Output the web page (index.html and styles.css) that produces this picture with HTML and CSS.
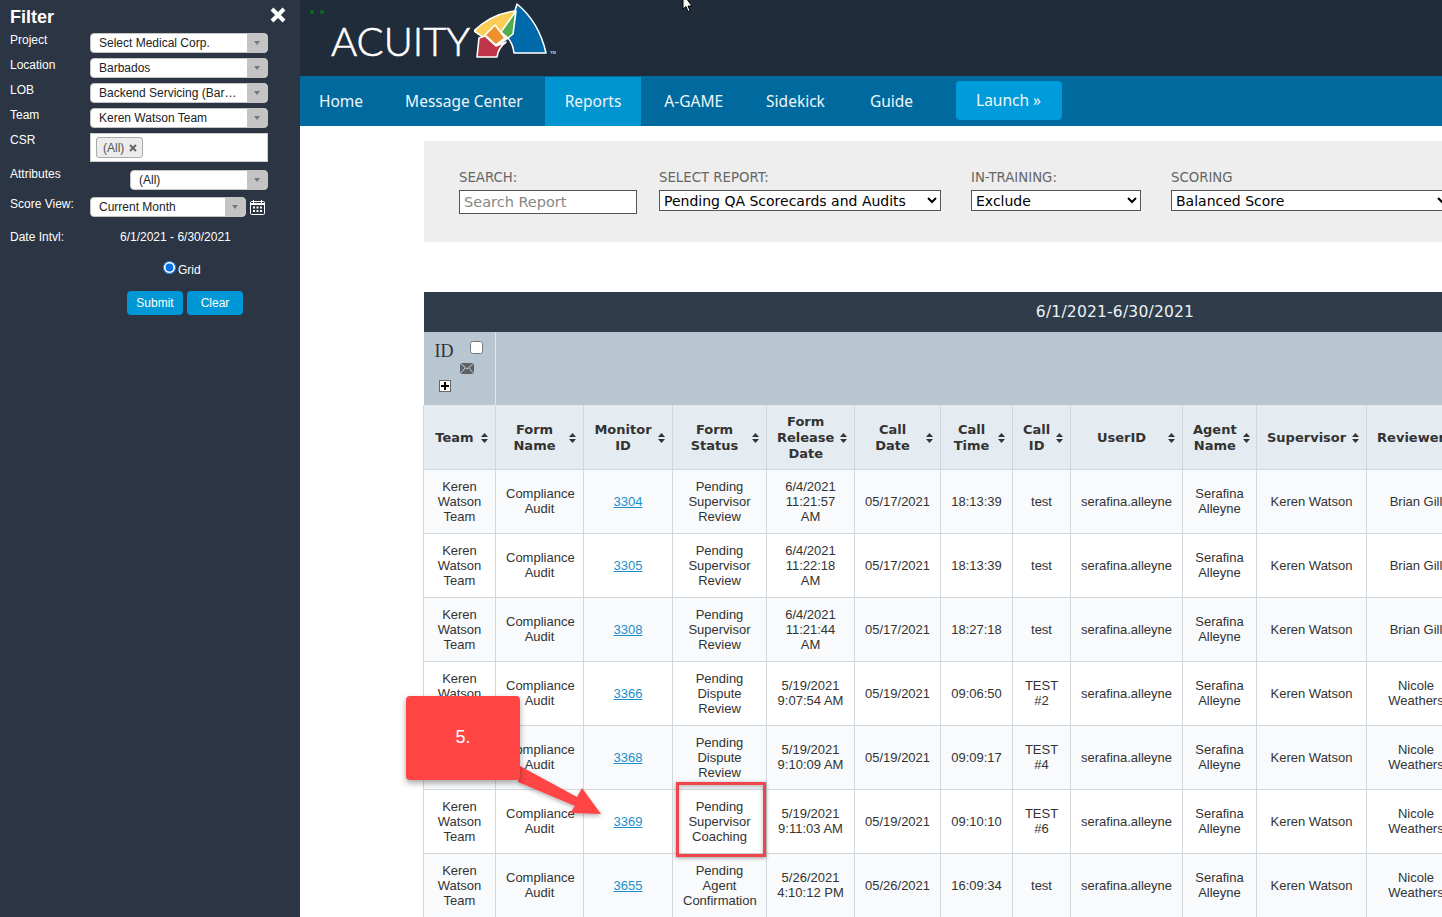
FILE: index.html
```html
<!DOCTYPE html>
<html lang="en">
<head>
    <meta charset="UTF-8">
    <meta name="viewport" content="width=device-width, initial-scale=1.0">
    <title>Acuity Reports</title>
    <link rel="stylesheet" href="styles.css">
</head>
<body>
    <!-- Filter sidebar -->
    <aside class="filter">
        <div class="filter-head">
            <h2>Filter</h2>
            <svg class="close" width="16" height="16" viewBox="0 0 16 16"><path d="M2 2 14 14M14 2 2 14" stroke="#fff" stroke-width="4"/></svg>
        </div>
        <div class="f-row">
            <label>Project</label>
            <div class="drop"><span>Select Medical Corp.</span><i class="drop-btn"></i></div>
        </div>
        <div class="f-row">
            <label>Location</label>
            <div class="drop"><span>Barbados</span><i class="drop-btn"></i></div>
        </div>
        <div class="f-row">
            <label>LOB</label>
            <div class="drop"><span>Backend Servicing (Bar…</span><i class="drop-btn"></i></div>
        </div>
        <div class="f-row">
            <label>Team</label>
            <div class="drop"><span>Keren Watson Team</span><i class="drop-btn"></i></div>
        </div>
        <div class="f-row f-csr">
            <label>CSR</label>
            <div class="multi">
                <span class="chip">(All)
                    <svg width="8" height="8" viewBox="0 0 8 8"><path d="M1 1 7 7M7 1 1 7" stroke="#666" stroke-width="2"/></svg>
                </span>
            </div>
        </div>
        <div class="f-row f-attr">
            <label>Attributes</label>
            <div class="drop drop-short"><span>(All)</span><i class="drop-btn"></i></div>
        </div>
        <div class="f-row f-score">
            <label>Score View:</label>
            <div class="drop drop-score"><span>Current Month</span><i class="drop-btn"></i></div>
            <svg class="cal" width="15" height="15" viewBox="0 0 15 15">
                <rect x="0.5" y="1.5" width="14" height="13" rx="1" fill="none" stroke="#fff"/>
                <path d="M0 3h15v2H0zM3 0h1v3H3zM11 0h1v3h-1z" fill="#fff"/>
                <path d="M3 6.500h2v2H3zM6.500 6.500h2v2h-2zM10 6.500h2v2h-2zM3 10h2v2H3zM6.500 10h2v2h-2zM10 10h2v2h-2z" fill="#fff"/>
            </svg>
        </div>
        <div class="f-row f-date">
            <label>Date Intvl:</label>
            <span class="date-val">6/1/2021 - 6/30/2021</span>
        </div>
        <div class="f-grid"><input type="radio" name="view" checked><span>Grid</span></div>
        <div class="f-btns">
            <button>Submit</button>
            <button>Clear</button>
        </div>
    </aside>

    <main class="main">
        <header class="top">
            <div class="dots"><i></i><i></i></div>
            <div class="logo">
                <span class="logo-word">ACUITY</span>
                <svg class="logo-mark" width="84" height="58" viewBox="475 2 84 58">
                    <g stroke="#fff" stroke-width="1.600" stroke-linejoin="round">
                        <path d="M518 4Q540 22 547 53L515 53Q514 43 508 37Z" fill="#0069aa"/>
                        <path d="M475 31Q492 14 516 11L509 38 497 46Z" fill="#f9cd56"/>
                        <path d="M480 38 478 57 498 57Q499 48 507 42L497 46 486 36Z" fill="#bd3546"/>
                        <path d="M486 35 496 25 506 38 497 45Z" fill="#ec912d"/>
                        <path d="M517 11 502 32 509 38 514 34Z" fill="#4fae4b"/>
                    </g>
                    <text x="551" y="54" class="logo-tm">TM</text>
                </svg>
            </div>
        </header>

        <nav class="nav">
            <a href="#" class="home">Home</a>
            <a href="#" class="msg">Message Center</a>
            <a href="#" class="active">Reports</a>
            <a href="#">A-GAME</a>
            <a href="#">Sidekick</a>
            <a href="#" class="guide">Guide</a>
            <a href="#" class="launch">Launch &raquo;</a>
        </nav>

        <div class="content">
            <div class="search-bar">
                <div class="field f-search">
                    <label>SEARCH:</label>
                    <input type="text" placeholder="Search Report">
                </div>
                <div class="field f-report">
                    <label>SELECT REPORT:</label>
                    <select><option>Pending QA Scorecards and Audits</option></select>
                </div>
                <div class="field f-train">
                    <label>IN-TRAINING:</label>
                    <select><option>Exclude</option></select>
                </div>
                <div class="field f-scoring">
                    <label>SCORING</label>
                    <select><option>Balanced Score</option></select>
                </div>
            </div>

            <table class="report">
                <colgroup>
                    <col class="c72"><col class="c88"><col class="c89"><col class="c94"><col class="c88"><col class="c86"><col class="c72"><col class="c58"><col class="c112"><col class="c74"><col class="c110"><col class="c99"><col class="c341">
                </colgroup>
                <thead>
                    <tr class="range"><th colspan="13">6/1/2021-6/30/2021</th></tr>
                    <tr class="tools">
                        <th>
                            <div class="tool-id"><span>ID</span><input type="checkbox"></div>
                            <svg class="mail" width="14" height="11" viewBox="0 0 14 11"><rect width="14" height="11" fill="#5c6268"/><path d="M0 0 7 6 14 0M0 11 5 5M14 11 9 5" stroke="#c9cfd4" fill="none"/></svg>
                            <div class="plus"></div>
                        </th>
                        <th colspan="12"></th>
                    </tr>
                    <tr class="heads">
                        <th><div class="h"><span>Team</span><svg width="7" height="10" viewBox="0 0 7 10"><path d="M3.500 0 7 4H0zM0 6h7l-3.500 4z"/></svg></div></th>
                        <th><div class="h"><span>Form Name</span><svg width="7" height="10" viewBox="0 0 7 10"><path d="M3.500 0 7 4H0zM0 6h7l-3.500 4z"/></svg></div></th>
                        <th><div class="h"><span>Monitor ID</span><svg width="7" height="10" viewBox="0 0 7 10"><path d="M3.500 0 7 4H0zM0 6h7l-3.500 4z"/></svg></div></th>
                        <th><div class="h"><span>Form Status</span><svg width="7" height="10" viewBox="0 0 7 10"><path d="M3.500 0 7 4H0zM0 6h7l-3.500 4z"/></svg></div></th>
                        <th><div class="h"><span>Form Release Date</span><svg width="7" height="10" viewBox="0 0 7 10"><path d="M3.500 0 7 4H0zM0 6h7l-3.500 4z"/></svg></div></th>
                        <th><div class="h"><span>Call Date</span><svg width="7" height="10" viewBox="0 0 7 10"><path d="M3.500 0 7 4H0zM0 6h7l-3.500 4z"/></svg></div></th>
                        <th><div class="h"><span>Call Time</span><svg width="7" height="10" viewBox="0 0 7 10"><path d="M3.500 0 7 4H0zM0 6h7l-3.500 4z"/></svg></div></th>
                        <th><div class="h"><span>Call ID</span><svg width="7" height="10" viewBox="0 0 7 10"><path d="M3.500 0 7 4H0zM0 6h7l-3.500 4z"/></svg></div></th>
                        <th><div class="h"><span>UserID</span><svg width="7" height="10" viewBox="0 0 7 10"><path d="M3.500 0 7 4H0zM0 6h7l-3.500 4z"/></svg></div></th>
                        <th><div class="h"><span>Agent Name</span><svg width="7" height="10" viewBox="0 0 7 10"><path d="M3.500 0 7 4H0zM0 6h7l-3.500 4z"/></svg></div></th>
                        <th><div class="h"><span>Supervisor</span><svg width="7" height="10" viewBox="0 0 7 10"><path d="M3.500 0 7 4H0zM0 6h7l-3.500 4z"/></svg></div></th>
                        <th><div class="h"><span>Reviewer</span><svg width="7" height="10" viewBox="0 0 7 10"><path d="M3.500 0 7 4H0zM0 6h7l-3.500 4z"/></svg></div></th>
                        <th></th>
                    </tr>
                </thead>
                <tbody>
                    <tr>
                        <td>Keren Watson Team</td><td>Compliance Audit</td><td><a href="#">3304</a></td><td>Pending Supervisor Review</td><td>6/4/2021 11:21:57 AM</td><td>05/17/2021</td><td>18:13:39</td><td>test</td><td>serafina.alleyne</td><td>Serafina Alleyne</td><td>Keren Watson</td><td>Brian Gill</td><td></td>
                    </tr>
                    <tr>
                        <td>Keren Watson Team</td><td>Compliance Audit</td><td><a href="#">3305</a></td><td>Pending Supervisor Review</td><td>6/4/2021 11:22:18 AM</td><td>05/17/2021</td><td>18:13:39</td><td>test</td><td>serafina.alleyne</td><td>Serafina Alleyne</td><td>Keren Watson</td><td>Brian Gill</td><td></td>
                    </tr>
                    <tr>
                        <td>Keren Watson Team</td><td>Compliance Audit</td><td><a href="#">3308</a></td><td>Pending Supervisor Review</td><td>6/4/2021 11:21:44 AM</td><td>05/17/2021</td><td>18:27:18</td><td>test</td><td>serafina.alleyne</td><td>Serafina Alleyne</td><td>Keren Watson</td><td>Brian Gill</td><td></td>
                    </tr>
                    <tr>
                        <td>Keren Watson Team</td><td>Compliance Audit</td><td><a href="#">3366</a></td><td>Pending Dispute Review</td><td>5/19/2021 9:07:54 AM</td><td>05/19/2021</td><td>09:06:50</td><td>TEST #2</td><td>serafina.alleyne</td><td>Serafina Alleyne</td><td>Keren Watson</td><td>Nicole Weathers</td><td></td>
                    </tr>
                    <tr>
                        <td>Keren Watson Team</td><td>Compliance Audit</td><td><a href="#">3368</a></td><td>Pending Dispute Review</td><td>5/19/2021 9:10:09 AM</td><td>05/19/2021</td><td>09:09:17</td><td>TEST #4</td><td>serafina.alleyne</td><td>Serafina Alleyne</td><td>Keren Watson</td><td>Nicole Weathers</td><td></td>
                    </tr>
                    <tr>
                        <td>Keren Watson Team</td><td>Compliance Audit</td><td><a href="#">3369</a></td><td>Pending Supervisor Coaching</td><td>5/19/2021 9:11:03 AM</td><td>05/19/2021</td><td>09:10:10</td><td>TEST #6</td><td>serafina.alleyne</td><td>Serafina Alleyne</td><td>Keren Watson</td><td>Nicole Weathers</td><td></td>
                    </tr>
                    <tr>
                        <td>Keren Watson Team</td><td>Compliance Audit</td><td><a href="#">3655</a></td><td>Pending Agent Confirmation</td><td>5/26/2021 4:10:12 PM</td><td>05/26/2021</td><td>16:09:34</td><td>test</td><td>serafina.alleyne</td><td>Serafina Alleyne</td><td>Keren Watson</td><td>Nicole Weathers</td><td></td>
                    </tr>
                </tbody>
            </table>
        </div>
    </main>

    <!-- Screenshot annotations on top of the page -->
    <svg class="note-arrow" width="100" height="65" viewBox="515 760 100 65">
        <defs>
            <filter id="soft" x="-20%" y="-20%" width="140%" height="140%"><feDropShadow dx="0" dy="2" stdDeviation="2" flood-color="#000" flood-opacity="0.3"/></filter>
        </defs>
        <path d="M520 766 577 797 582 788 601 814 570 813 575 806 518 782Z" fill="#ff4444" filter="url(#soft)"/>
    </svg>
    <div class="note">5.</div>
    <div class="note-box"></div>
    <svg class="cursor" width="12" height="13" viewBox="0 0 12 13"><path d="M1 -6V9L4 6.500 6 11.500 8 10.500 6 6H10Z" fill="#fff" stroke="#000"/></svg>
</body>
</html>
```

FILE: styles.css
```css
* {
    box-sizing: border-box;
}

html, body {
    height: 100%;
}

body {
    margin: 0;
    display: flex;
    overflow: hidden;
    font-family: "Liberation Sans", Arial, sans-serif;
    color: #333;
    background: #fff;
    position: relative;
}

/* Filter sidebar */
.filter {
    flex: 0 0 300px;
    background: #2b3543;
    color: #fff;
    padding: 0 32px 0 10px;
    font-size: 12px;
}

.filter-head {
    height: 33px;
    display: flex;
    justify-content: space-between;
    margin-right: -18px;
}

.filter-head h2 {
    margin: 7px 0 0;
    font-size: 18px;
    line-height: 20px;
}

.close {
    margin-top: 7px;
}

.f-row {
    display: flex;
    height: 20px;
    margin-bottom: 5px;
}

.f-row label {
    flex: 0 0 80px;
    line-height: 14px;
}

.drop {
    flex: 1;
    display: flex;
    justify-content: space-between;
    background: #fff;
    border: 1px solid #c4c4c4;
    border-radius: 4px;
    color: #222;
    line-height: 18px;
    padding-left: 8px;
    overflow: hidden;
}

.drop-short {
    flex: 0 0 138px;
    margin-left: auto;
}

.f-attr {
    margin-top: 8px;
    margin-bottom: 7px;
}

.f-attr label {
    flex: 0 0 auto;
    line-height: 8px;
}

.f-score .drop {
    flex: 0 0 156px;
}

.drop-btn {
    width: 20px;
    margin: -1px 0;
    background: #c4c4c4;
    position: relative;
}

.drop-btn::after {
    content: "";
    position: absolute;
    left: 7px;
    top: 8px;
    border: 3.500px solid transparent;
    border-top: 4px solid #777;
    border-bottom: 0;
}

.f-csr.f-row {
    height: 29px;
    margin-bottom: 0;
}

.multi {
    flex: 1;
    background: #fff;
    border: 1px solid #ccc;
    padding: 3px 5px;
}

.chip {
    display: inline-flex;
    align-items: center;
    gap: 5px;
    height: 21px;
    padding: 0 5px 0 6px;
    background: #ececec;
    border: 1px solid #aaa;
    border-radius: 3px;
    color: #555;
}

.cal {
    margin: 3px 0 0 4px;
}

.f-date {
    margin-top: 12px;
    margin-bottom: 0;
}

.f-date label, .date-val {
    line-height: 16px;
}

.date-val {
    padding-left: 30px;
}

.f-grid {
    display: flex;
    align-items: flex-end;
    margin: 11px 0 0 153px;
    height: 18px;
}

.f-grid input {
    width: 13px;
    height: 13px;
    margin: 0 2px 4px 0;
    accent-color: #0a6ee0;
}

.f-grid span {
    line-height: 15px;
}

.f-btns {
    display: flex;
    gap: 4px;
    margin: 13px 0 0 117px;
}

.f-btns button {
    width: 56px;
    height: 24px;
    background: #0097d7;
    color: #fff;
    border: none;
    border-radius: 4px;
    font: 12px "Liberation Sans", Arial, sans-serif;
}

/* Header and nav */
.main {
    flex: 1;
    min-width: 0;
    overflow: hidden;
}

.top {
    height: 76px;
    background: #202c39;
    display: flex;
    position: relative;
}

.dots {
    display: flex;
    gap: 6px;
    margin: 10px 0 0 10px;
}

.dots i {
    width: 4px;
    height: 4px;
    border-radius: 50%;
    background: #0a6e1a;
}

.logo {
    display: flex;
    margin-left: 7px;
}

.logo-word {
    font-family: "Lato", sans-serif;
    font-weight: 300;
    font-size: 40px;
    line-height: 41px;
    margin-top: 21px;
    color: #fff;
    -webkit-text-stroke: 0.6px #fff;
    width: 143px;
}

.logo-mark {
    margin-top: 2px;
}

.logo-tm {
    font-size: 4px;
    font-weight: bold;
    fill: #ccc;
}

.nav {
    height: 50px;
    background: #006a9e;
    display: flex;
    gap: 3px;
    align-items: stretch;
}

.nav a {
    padding: 0 20px;
    color: #eef5f9;
    font: 15.500px/50px "Noto Sans", Tahoma, sans-serif;
    text-decoration: none;
}

.nav a.home {
    padding: 0 19px;
}

.nav a.msg {
    padding-right: 19px;
}

.nav a.active {
    background: #0094d0;
    margin-top: 1px;
    line-height: 48px;
}

.nav a.guide {
    margin-left: 2px;
}

.nav a.launch {
    background: #009bdb;
    margin: 5px 0 6px 20px;
    padding-right: 21px;
    line-height: 38px;
    border-radius: 4px;
}

/* Search panel */
.content {
    padding: 15px 0 0 124px;
    width: 1506px;
}

.search-bar {
    height: 101px;
    background: #eee;
    display: flex;
    padding: 30px 0 0 35px;
}

.field label {
    display: block;
    font: 13.300px/14px "DejaVu Sans", Verdana, sans-serif;
    color: #666;
    margin-bottom: 5px;
}

.field input, .field select {
    display: block;
    height: 21px;
    width: 100%;
    background: #fff;
    border: 1px solid #555;
    border-radius: 0;
    font: 14px "DejaVu Sans", Verdana, sans-serif;
    padding: 0;
}

.field input {
    height: 24px;
    padding-left: 4px;
    font-size: 14.500px;
}

.field input::placeholder {
    color: #888;
}

.f-search { width: 178px; margin-right: 22px; }
.f-report { width: 282px; margin-right: 30px; }
.f-train { width: 170px; margin-right: 30px; }
.f-scoring { width: 280px; }

/* Report table */
.report {
    margin: 50px 0 0 -1px;
    width: 1383px;
    table-layout: fixed;
    border-collapse: collapse;
}

.c72 { width: 72px; }
.c88 { width: 88px; }
.c89 { width: 89px; }
.c94 { width: 94px; }
.c86 { width: 86px; }
.c58 { width: 58px; }
.c112 { width: 112px; }
.c74 { width: 74px; }
.c110 { width: 110px; }
.c99 { width: 99px; }
.c341 { width: 341px; }

.range th {
    height: 40px;
    background: #2e3c4b;
    color: #eef1f4;
    font: 15.500px "DejaVu Sans", Verdana, sans-serif;
    letter-spacing: 0.2px;
}

.tools th {
    height: 73px;
    background: #b8c6d2;
    border-right: 1px solid #dfe6ec;
    vertical-align: top;
    text-align: left;
    padding: 0;
    font-weight: normal;
}

.tool-id {
    display: flex;
    padding: 9px 0 0 11px;
}

.tool-id span {
    font: 18px/20px "Liberation Serif", serif;
    width: 35px;
    color: #333;
}

.tool-id input {
    width: 13px;
    height: 13px;
    margin: 0;
}

.mail {
    display: block;
    margin: 2px 0 0 36px;
}

.plus {
    width: 12px;
    height: 12px;
    margin: 6px 0 0 15px;
    border: 1px solid #666;
    background: #fff;
    position: relative;
}

.plus::before {
    content: "";
    position: absolute;
    left: 1px;
    right: 1px;
    top: 4px;
    height: 2px;
    background: #000;
}

.plus::after {
    content: "";
    position: absolute;
    top: 1px;
    bottom: 1px;
    left: 4px;
    width: 2px;
    background: #000;
}

.heads th {
    height: 64px;
    padding: 2px 0 0;
    background: #e4ebf1;
    border: 1px solid #d0d8de;
    border-top: 0;
    font: bold 13px/16px "DejaVu Sans", Verdana, sans-serif;
    color: #333;
}

.h {
    display: flex;
    align-items: center;
    gap: 6px;
    padding: 0 7px 0 10px;
}

.h span {
    flex: 1;
    text-align: center;
}

.h svg {
    flex: none;
    fill: #333;
}

.report td {
    height: 64px;
    padding: 0 10px;
    border: 1px solid #d0d8de;
    text-align: center;
    font-size: 13px;
    line-height: 15px;
}

.report tbody tr:nth-child(odd) {
    background: #f8fafb;
}

.report a {
    color: #1b8fcb;
}

/* Annotations */
.note {
    position: absolute;
    left: 406px;
    top: 696px;
    width: 114px;
    height: 84px;
    padding-top: 31px;
    background: #ff4444;
    border-radius: 4px;
    box-shadow: 0 3px 6px rgba(0, 0, 0, 0.35);
    color: #fff;
    font-size: 18px;
    line-height: 20px;
    text-align: center;
}

.note-arrow {
    position: absolute;
    left: 515px;
    top: 760px;
}

.note-box {
    position: absolute;
    left: 676px;
    top: 782px;
    width: 90px;
    height: 75px;
    border: 3px solid #f0454b;
    box-shadow: 0 1px 4px rgba(0, 0, 0, 0.4), inset 0 2px 4px rgba(0, 0, 0, 0.25);
}

.cursor {
    position: absolute;
    left: 682px;
    top: 0;
}
```
